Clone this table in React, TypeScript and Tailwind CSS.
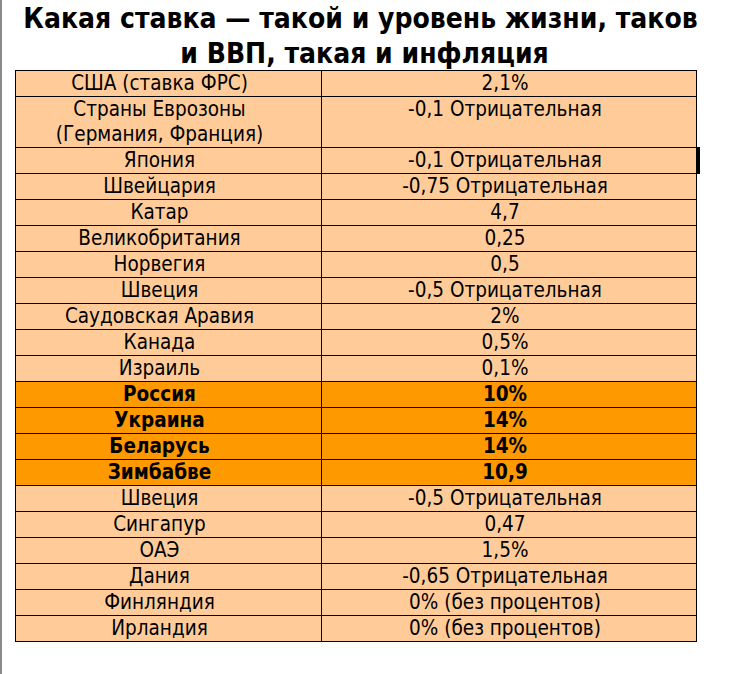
import React from "react";

type Row = { c: string; v: string; bold?: boolean; two?: string; mark?: boolean };

const rows: Row[] = [
  { c: "США (ставка ФРС)", v: "2,1%" },
  { c: "Страны Еврозоны", two: "(Германия, Франция)", v: "-0,1 Отрицательная" },
  { c: "Япония", v: "-0,1 Отрицательная", mark: true },
  { c: "Швейцария", v: "-0,75 Отрицательная" },
  { c: "Катар", v: "4,7" },
  { c: "Великобритания", v: "0,25" },
  { c: "Норвегия", v: "0,5" },
  { c: "Швеция", v: "-0,5 Отрицательная" },
  { c: "Саудовская Аравия", v: "2%" },
  { c: "Канада", v: "0,5%" },
  { c: "Израиль", v: "0,1%" },
  { c: "Россия", v: "10%", bold: true },
  { c: "Украина", v: "14%", bold: true },
  { c: "Беларусь", v: "14%", bold: true },
  { c: "Зимбабве", v: "10,9", bold: true },
  { c: "Швеция", v: "-0,5 Отрицательная" },
  { c: "Сингапур", v: "0,47" },
  { c: "ОАЭ", v: "1,5%" },
  { c: "Дания", v: "-0,65 Отрицательная" },
  { c: "Финляндия", v: "0% (без процентов)" },
  { c: "Ирландия", v: "0% (без процентов)" },
];

export default function App() {
  return (
    <div
      className="w-[729px] h-[674px] bg-white border-l-2 border-[#8a8a8a] text-black overflow-hidden"
      style={{ fontFamily: '"DejaVu Sans Condensed", "DejaVu Sans", sans-serif' }}
    >
      <div className="h-[70px] pt-[1px] pr-[2px] text-center text-[28px] font-bold leading-[35px] whitespace-nowrap">
        <div className="h-[35px] pr-[8px]">Какая ставка — такой и уровень жизни, таков</div>
        <div className="h-[34px]">и ВВП, такая и инфляция</div>
      </div>
      <div className="ml-[13px] w-[682px] border border-black text-[20.5px] leading-[25px]">
        {rows.map((r, i) => (
          <div
            key={i}
            className={
              "relative flex " +
              (i < rows.length - 1 ? "border-b border-black " : "") +
              (r.bold ? "bg-[#ff9900] font-bold" : "bg-[#ffcc99]")
            }
          >
            <div className="w-[306px] border-r border-black text-center pr-[18px] whitespace-nowrap">
              <div className="h-[25px]">{r.c}</div>
              {r.two && <div className="h-[25px]">{r.two}</div>}
            </div>
            <div className="flex-1 text-center pr-[8px] whitespace-nowrap">
              <div className="h-[25px]">{r.v}</div>
            </div>
            {r.mark && (
              <span className="absolute -right-[4px] -top-px -bottom-px w-[3px] bg-black" />
            )}
          </div>
        ))}
      </div>
    </div>
  );
}
